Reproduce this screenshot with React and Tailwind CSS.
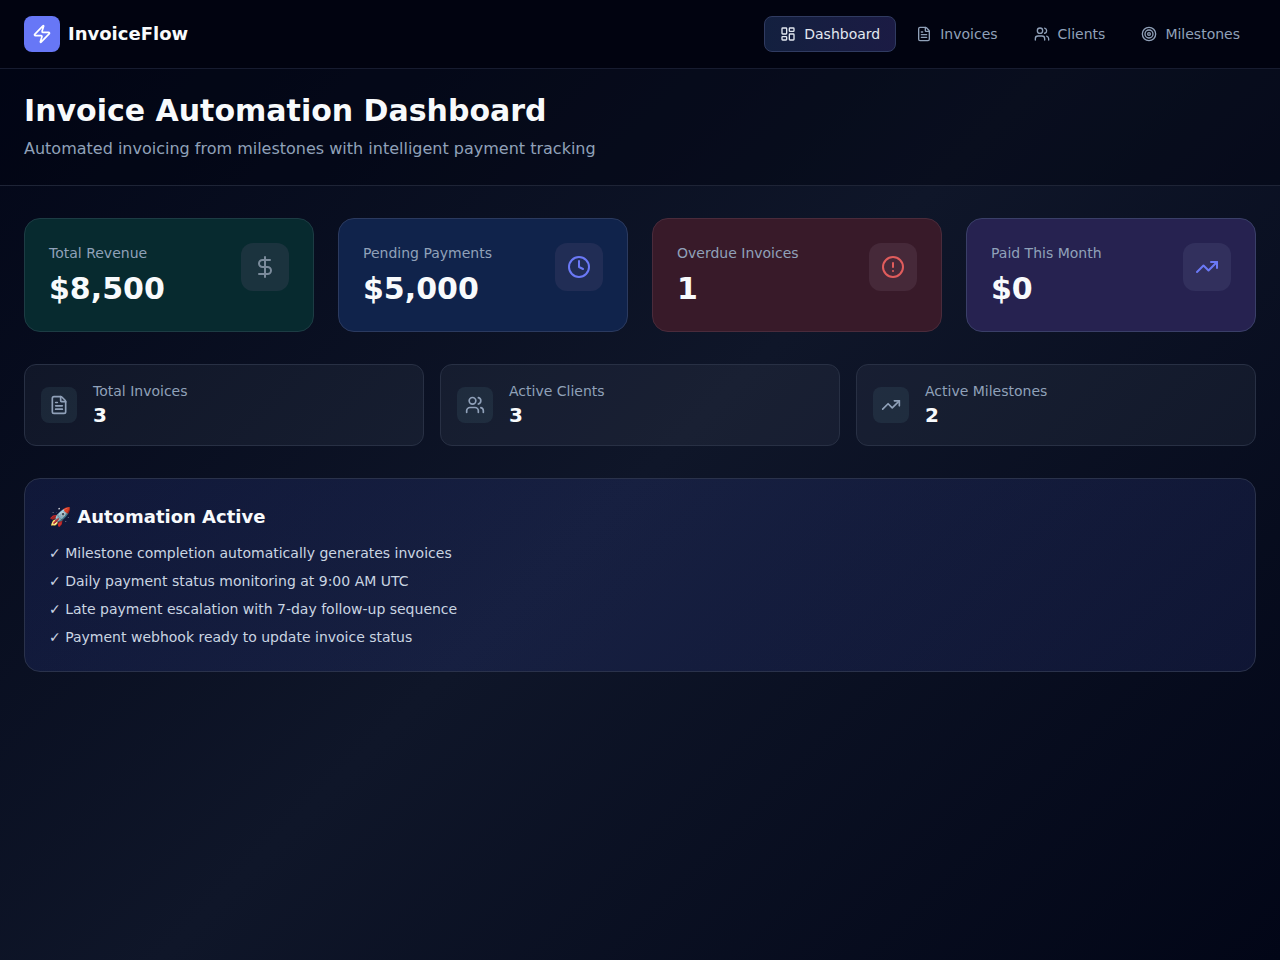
import React from "react";
import {
    CircleAlert,
    Clock,
    DollarSign,
    FileText,
    LayoutDashboard,
    Target,
    TrendingUp,
    Users,
    Zap,
} from "lucide-react";

const navItems = [
    { label: "Dashboard", icon: LayoutDashboard, active: true },
    { label: "Invoices", icon: FileText },
    { label: "Clients", icon: Users },
    { label: "Milestones", icon: Target },
];

const stats = [
    {
        label: "Total Revenue",
        value: "$8,500",
        icon: DollarSign,
        card: "bg-[#072a2f] border-[#1d3c44]",
        tile: "bg-[#1b333e]",
        color: "text-[#7b8b9b]",
    },
    {
        label: "Pending Payments",
        value: "$5,000",
        icon: Clock,
        card: "bg-[#10234b] border-[#2b3a5f]",
        tile: "bg-[#212d55]",
        color: "text-[#6b79f6]",
    },
    {
        label: "Overdue Invoices",
        value: "1",
        icon: CircleAlert,
        card: "bg-[#381a29] border-[#4a2b3b]",
        tile: "bg-[#462939]",
        color: "text-[#e05c5c]",
    },
    {
        label: "Paid This Month",
        value: "$0",
        icon: TrendingUp,
        card: "bg-[#262250] border-[#3a3f68]",
        tile: "bg-[#32305d]",
        color: "text-[#6b79f6]",
    },
];

const counts = [
    { label: "Total Invoices", value: "3", icon: FileText },
    { label: "Active Clients", value: "3", icon: Users },
    { label: "Active Milestones", value: "2", icon: TrendingUp },
];

const automations = [
    "Milestone completion automatically generates invoices",
    "Daily payment status monitoring at 9:00 AM UTC",
    "Late payment escalation with 7-day follow-up sequence",
    "Payment webhook ready to update invoice status",
];

const Header = () => (
    <header className="flex items-center justify-between border-b border-[#171c30] bg-[#010310] px-6 py-4">
        <div className="flex items-center gap-2">
            <div className="flex h-9 w-9 items-center justify-center rounded-lg bg-[#6777f6]">
                <Zap className="h-5 w-5 text-white" />
            </div>
            <span className="text-lg font-bold text-slate-50">InvoiceFlow</span>
        </div>
        <nav className="flex gap-1">
            {navItems.map(({ label, icon: Icon, active }) => (
                <a
                    key={label}
                    className={`flex h-9 items-center gap-2 rounded-lg border px-[15px] text-sm ${
                        active
                            ? "border-[#303b61] bg-linear-to-r from-[#13203f] to-[#1b1b44] text-slate-200"
                            : "border-transparent text-slate-400"
                    }`}
                >
                    <Icon className="h-4 w-4" />
                    {label}
                </a>
            ))}
        </nav>
    </header>
);

const App = () => {
    return (
        <div className="min-h-screen bg-[linear-gradient(135deg,#020617_0%,#0f1629_50%,#020617_100%)] font-['DejaVu_Sans',sans-serif]">
            <Header />

            <div className="border-b border-[#1e2436] bg-[#010310]/40 px-6 py-6">
                <h1 className="text-3xl font-bold text-slate-50">
                    Invoice Automation Dashboard
                </h1>
                <p className="mt-2 text-base text-slate-400">
                    Automated invoicing from milestones with intelligent payment tracking
                </p>
            </div>

            <main className="space-y-8 px-6 py-8">
                {/* Stat cards */}
                <div className="grid grid-cols-4 gap-6">
                    {stats.map(({ label, value, icon: Icon, card, tile, color }) => (
                        <div
                            key={label}
                            className={`flex items-start justify-between rounded-2xl border p-6 ${card}`}
                        >
                            <div>
                                <p className="text-sm text-slate-400">{label}</p>
                                <p className="mt-2 text-3xl font-bold text-slate-50">{value}</p>
                            </div>
                            <div className={`rounded-xl p-3 ${tile}`}>
                                <Icon className={`h-6 w-6 ${color}`} />
                            </div>
                        </div>
                    ))}
                </div>

                {/* Counts */}
                <div className="grid grid-cols-3 gap-4">
                    {counts.map(({ label, value, icon: Icon }) => (
                        <div
                            key={label}
                            className="flex items-center gap-4 rounded-xl border border-[#283044] bg-[#e0e4ff]/5 p-4"
                        >
                            <div className="rounded-lg bg-[#476b78]/20 p-2">
                                <Icon className="h-5 w-5 text-slate-400" />
                            </div>
                            <div>
                                <p className="text-sm text-slate-400">{label}</p>
                                <p className="text-xl font-bold text-slate-50">{value}</p>
                            </div>
                        </div>
                    ))}
                </div>

                {/* Automation status */}
                <div className="rounded-2xl border border-[#2a324b] bg-linear-to-r from-[#4b66f6]/12 to-[#5467e6]/12 p-6">
                    <h3 className="mb-3 text-lg font-bold text-slate-50">
                        🚀 Automation Active
                    </h3>
                    <ul className="space-y-2 text-sm text-slate-300">
                        {automations.map((item) => (
                            <li key={item}>✓ {item}</li>
                        ))}
                    </ul>
                </div>
            </main>
        </div>
    );
};

export default App;
